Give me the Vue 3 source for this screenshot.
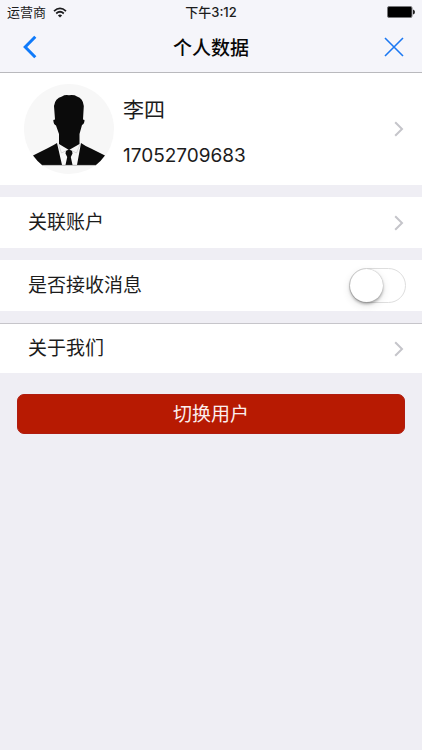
<script setup>
import { ref } from 'vue'

const user = { name: '李四', phone: '17052709683' }
const receiveMessages = ref(false)
</script>

<template>
  <div class="page">
    <header class="top">
      <div class="status">
        <div class="carrier">
          <span>运营商</span>
          <svg class="wifi" viewBox="0 0 14 11" aria-hidden="true">
            <path d="M1 4.1Q7-1.4 13 4.1M3.2 6.5Q7 3 10.8 6.5" fill="none" stroke="#1c1c1e" stroke-width="1.7" />
            <path d="M4.9 8.4Q7 6.6 9.1 8.4L7 10.6Z" fill="#1c1c1e" />
          </svg>
        </div>
        <span class="time">下午3:12</span>
        <svg class="battery" viewBox="0 0 28 12" aria-hidden="true">
          <rect x="0.5" y="0.5" width="24.5" height="11" rx="1.5" fill="#000" stroke="#77777a" />
          <path d="M26 3.5Q28 4 28 6T26 8.5Z" fill="#222" />
        </svg>
      </div>
      <nav class="nav">
        <button class="icon-button" type="button" aria-label="返回">
          <svg class="back" viewBox="0 0 14 24"><path d="M12.3 1.7L2.2 12L12.3 22.3" fill="none" stroke="#0f7afa" stroke-width="3" /></svg>
        </button>
        <h1>个人数据</h1>
        <button class="icon-button close-button" type="button" aria-label="关闭">
          <svg class="close" viewBox="0 0 20 20"><path d="M1 1L19 19M19 1L1 19" fill="none" stroke="#1b78f2" stroke-width="1.6" /></svg>
        </button>
      </nav>
    </header>

    <main>
      <a class="row profile" href="#profile">
        <svg class="avatar" viewBox="0 0 90 90" aria-hidden="true">
          <circle cx="45" cy="45" r="45" fill="#f7f7f7" />
          <path d="M9 71.5L24 64Q30 61 33 59L38 81H18Q13 77 9 71.5Z" fill="#0b0b0b" />
          <path d="M57 59Q61 62 67 64.5L81 71.5Q77 77 72 81H53Z" fill="#0b0b0b" />
          <path d="M35 50V60L45 66L55.5 60V50L58 41Q60.5 40 60.5 36L59 35.5L59.8 22Q59 14 53 12.5Q50 10.5 45 11.3Q41 10.5 38 12.5Q31 14 30 22L31 35.5L29.3 36Q29.5 40.5 32 41.5Z" fill="#0b0b0b" />
          <path d="M42 66.5L45 65.5L48 66.5L48.5 69.5L46.8 73L48.5 81H41.5L43.2 73L41.5 69.5Z" fill="#0b0b0b" />
          <path d="M34.5 60.5L37.5 69L43.5 66M56 60.5L52.5 69L46.5 66" fill="none" stroke="#c4c4c4" stroke-width="0.6" />
          <path d="M18 81.3H72" stroke="#8b8b8b" stroke-width="0.6" />
        </svg>
        <div class="identity">
          <span class="name">{{ user.name }}</span>
          <span class="phone">{{ user.phone }}</span>
        </div>
        <svg class="chevron" viewBox="0 0 10 16" aria-hidden="true"><path d="M1.2 1.2L8 8L1.2 14.8" /></svg>
      </a>

      <a class="row" href="#accounts">
        <span>关联账户</span>
        <svg class="chevron" viewBox="0 0 10 16" aria-hidden="true"><path d="M1.2 1.2L8 8L1.2 14.8" /></svg>
      </a>

      <label class="row switch-row">
        <span>是否接收消息</span>
        <input v-model="receiveMessages" class="switch" type="checkbox" role="switch" />
      </label>

      <a class="row about" href="#about">
        <span>关于我们</span>
        <svg class="chevron" viewBox="0 0 10 16" aria-hidden="true"><path d="M1.2 1.2L8 8L1.2 14.8" /></svg>
      </a>

      <button class="switch-user" type="button">切换用户</button>
    </main>
  </div>
</template>

<style>
body {
  margin: 0;
  background: #efeef4;
}
</style>

<style scoped>
.page {
  min-height: 100vh;
  background: #efeef4;
  color: #1c1c1c;
  font-family: Inter, "Noto Sans CJK SC", sans-serif;
  font-size: 19px;
  line-height: 24px;
}

svg {
  display: block;
  flex: none;
}

.top {
  background: #f5f5fa;
  border-bottom: 1px solid #b9b9bd;
}

.status {
  display: grid;
  grid-template-columns: 1fr auto 1fr;
  align-items: center;
  height: 24px;
  padding: 0 7px;
  font-size: 13px;
}

.carrier {
  display: flex;
  align-items: center;
  gap: 7px;
}

.wifi {
  width: 14px;
  height: 11px;
}

.time {
  font-weight: 500;
}

.battery {
  width: 28px;
  height: 12px;
  justify-self: end;
}

.nav {
  display: grid;
  grid-template-columns: 1fr auto 1fr;
  align-items: center;
  height: 46px;
  padding: 0 18px 2px;
}

h1 {
  margin: 0;
  padding-top: 4px;
  color: #080808;
  font-size: 19px;
  font-weight: 500;
  line-height: 24px;
}

.icon-button {
  justify-self: start;
  padding: 0 5px;
  border: 0;
  background: none;
  cursor: pointer;
}

.close-button {
  justify-self: end;
  padding: 0;
}

.back {
  width: 14px;
  height: 24px;
}

.close {
  width: 20px;
  height: 20px;
}

main {
  display: flex;
  flex-direction: column;
  gap: 12px;
}

.row {
  display: flex;
  align-items: center;
  justify-content: space-between;
  box-sizing: border-box;
  min-height: 51px;
  padding: 0 18px 0 28px;
  background: #fff;
  color: inherit;
  text-decoration: none;
}

.profile {
  min-height: 112px;
  padding-left: 24px;
  gap: 9px;
}

.avatar {
  width: 90px;
  height: 90px;
}

.identity {
  display: flex;
  flex: 1;
  flex-direction: column;
  gap: 22px;
  padding-top: 8px;
}

.name {
  font-size: 21px;
}

.chevron {
  width: 10px;
  height: 16px;
  fill: none;
  stroke: #c5c5ca;
  stroke-width: 2;
}

.switch-row {
  padding-right: 16px;
}

.about {
  min-height: 50px;
  border-top: 1px solid #c6c5ca;
}

.switch {
  appearance: none;
  display: flex;
  box-sizing: border-box;
  width: 57px;
  height: 35px;
  margin: 0;
  border: 1px solid #dedede;
  border-radius: 18px;
  background: #fff;
  cursor: pointer;
}

.switch::before {
  content: "";
  width: 33px;
  height: 33px;
  border-radius: 50%;
  background: #fff;
  box-shadow: 0 0 1px #999, 0 2px 3px rgba(0, 0, 0, 0.3), 0 3px 8px rgba(0, 0, 0, 0.12);
}

.switch:checked {
  justify-content: flex-end;
  background: #4cd964;
}

.switch-user {
  height: 40px;
  margin: 9px 17px 0;
  padding: 2px 0 0;
  border: 1px solid #b01c10;
  border-radius: 7px;
  background: #b71a02;
  color: #fbeeee;
  font: inherit;
  cursor: pointer;
}
</style>
